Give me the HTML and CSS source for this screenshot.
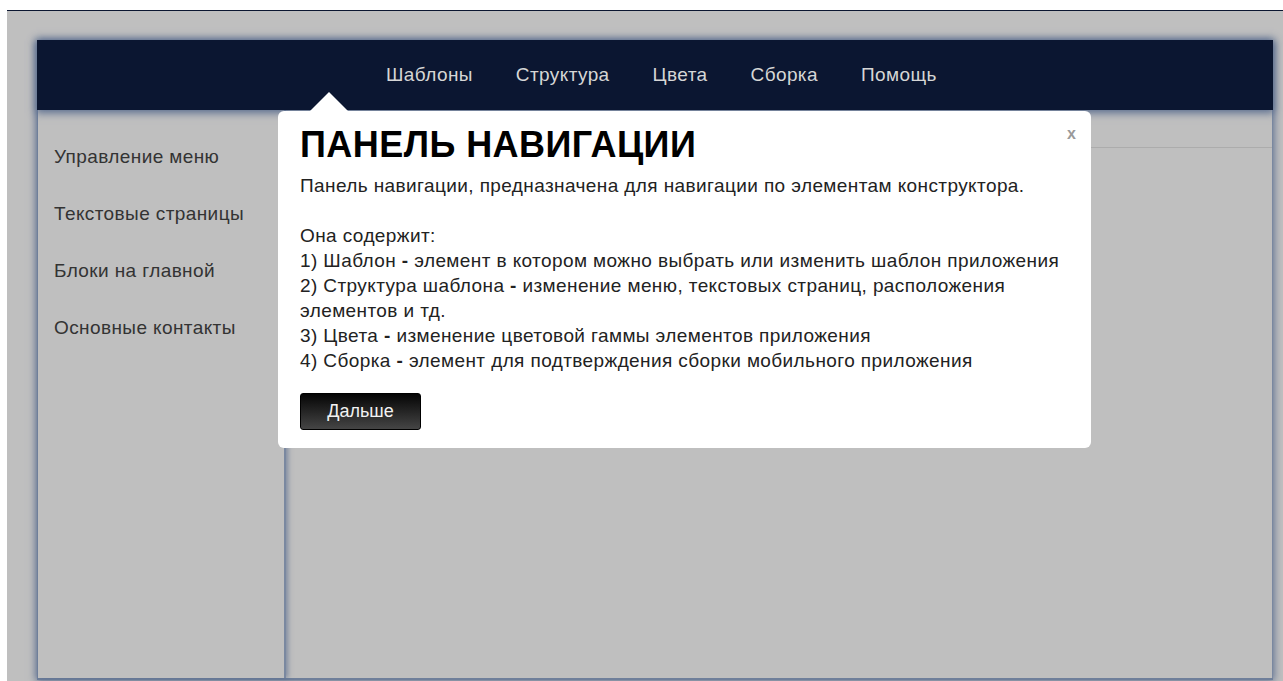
FILE: index.html
```html
<!DOCTYPE html>
<html lang="ru">
<head>
<meta charset="utf-8">
<title>Конструктор приложения</title>
<link rel="stylesheet" href="styles.css">
</head>
<body>
<div class="frame">
  <div class="app">
    <header class="topbar">
      <nav class="topnav">
        <a class="topnav-item">Шаблоны</a>
        <a class="topnav-item">Структура</a>
        <a class="topnav-item">Цвета</a>
        <a class="topnav-item">Сборка</a>
        <a class="topnav-item">Помощь</a>
      </nav>
    </header>
    <div class="workspace">
      <aside class="sidebar">
        <ul class="side-list">
          <li class="side-item">Управление меню</li>
          <li class="side-item">Текстовые страницы</li>
          <li class="side-item">Блоки на главной</li>
          <li class="side-item">Основные контакты</li>
        </ul>
      </aside>
      <main class="content">
        <div class="content-head"></div>
      </main>
    </div>
  </div>

  <div class="tour-popup">
    <span class="tour-close">x</span>
    <h1 class="tour-title">ПАНЕЛЬ НАВИГАЦИИ</h1>
    <p class="tour-text">Панель навигации, предназначена для навигации по элементам конструктора.<br><br>Она содержит:<br>1) Шаблон <b>-</b> элемент в котором можно выбрать или изменить шаблон приложения<br>2) Структура шаблона <b>-</b> изменение меню, текстовых страниц, расположения элементов и тд.<br>3) Цвета <b>-</b> изменение цветовой гаммы элементов приложения<br>4) Сборка <b>-</b> элемент для подтверждения сборки мобильного приложения</p>
    <button class="tour-next">Дальше</button>
  </div>
</div>
</body>
</html>
```

FILE: styles.css
```css
html, body {
  margin: 0;
  padding: 0;
  height: 100%;
  overflow: hidden;
  background: #ffffff;
  font-family: "Liberation Sans", Arial, sans-serif;
}

.frame {
  position: relative;
  margin: 10px 0 0 7px;
  height: 671px;
  box-sizing: border-box;
  border-top: 1px solid #0b1631;
  background: #bfbfbf;
  padding: 29px 10px 0 30px;
}

.app {
  width: 1236px;
  display: flex;
  flex-direction: column;
  box-shadow: 0 0 8px 1px #5a6d8f;
}

/* top navigation bar */
.topbar {
  height: 70px;
  background: #0b1631;
  display: flex;
  align-items: center;
  box-shadow: 0 2px 8px 1px #5a6d8f;
  position: relative;
  z-index: 1;
}

.topnav {
  display: flex;
  gap: 43px;
  padding-left: 349px;
}

.topnav-item {
  color: #d6d6d6;
  font-size: 19px;
  letter-spacing: 0.4px;
  cursor: pointer;
}

/* sidebar + main */
.workspace {
  display: flex;
  height: 568px;
  border-bottom: 2px solid #6f7f9a;
}

.sidebar {
  width: 246px;
  border-left: 1px solid #6f7f9a;
  border-right: 2px solid #7a88a0;
  box-shadow: 2px 0 5px rgba(80, 100, 138, 0.6);
  position: relative;
  background: #bfbfbf;
}

.side-list {
  list-style: none;
  margin: 0;
  padding: 18px 0 0 16px;
}

.side-item {
  height: 57px;
  line-height: 57px;
  font-size: 19px;
  letter-spacing: 0.4px;
  color: #333333;
}

.content {
  flex: 1;
  border-right: 1px solid #7a88a0;
}

.content-head {
  height: 37px;
  border-bottom: 1px solid #acacac;
}

/* guided tour popup */
.tour-popup {
  position: absolute;
  left: 271px;
  top: 100px;
  width: 813px;
  box-sizing: border-box;
  padding: 16px 22px 18px 22px;
  background: #ffffff;
  border-radius: 6px;
  z-index: 2;
}

.tour-popup::before {
  content: "";
  position: absolute;
  top: -19px;
  left: 32px;
  border-left: 19px solid transparent;
  border-right: 19px solid transparent;
  border-bottom: 19px solid #ffffff;
}

.tour-close {
  position: absolute;
  top: 14px;
  right: 15px;
  color: #9a9a9a;
  font-size: 16px;
  font-weight: bold;
  cursor: pointer;
}

.tour-title {
  margin: 0 0 10px;
  font-size: 36px;
  line-height: 36px;
  letter-spacing: 0.45px;
  font-weight: bold;
  color: #000000;
}

.tour-text {
  margin: 0;
  font-size: 19px;
  line-height: 25px;
  letter-spacing: 0.4px;
  color: #222222;
}

.tour-next {
  display: block;
  margin-top: 20px;
  width: 121px;
  height: 37px;
  border: 1px solid #000000;
  border-radius: 3px;
  background: linear-gradient(#050505, #454545);
  color: #f2f2f2;
  font-family: "Liberation Sans", Arial, sans-serif;
  font-size: 18px;
  cursor: pointer;
}
```
